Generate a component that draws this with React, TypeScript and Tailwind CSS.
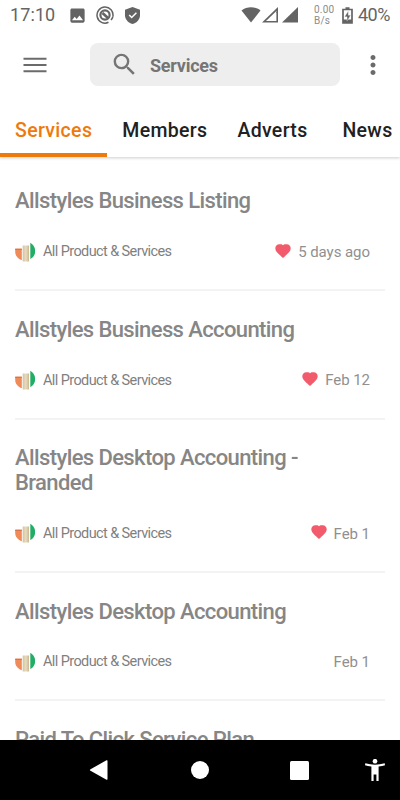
import { MdSearch, MdImage, MdMoreVert } from "react-icons/md";

interface Listing {
  title: string;
  date?: string;
  liked?: boolean;
}

const tabs = ["Services", "Members", "Adverts", "News"];

const listings: Listing[] = [
  { title: "Allstyles Business Listing", date: "5 days ago", liked: true },
  { title: "Allstyles Business Accounting", date: "Feb 12", liked: true },
  { title: "Allstyles Desktop Accounting - Branded", date: "Feb 1", liked: true },
  { title: "Allstyles Desktop Accounting", date: "Feb 1" },
  { title: "Paid To Click Service Plan" },
];

const StatusBar = () => (
  <div className="flex h-[30px] shrink-0 items-center pl-[10px] pr-[9px] text-[#646464]">
    <span className="w-[58px] text-[18px] leading-[30px] tracking-[0.1px]">17:10</span>
    <MdImage className="h-[19px] w-[19px]" />
    <svg className="ml-[9px] h-[18px] w-[18px]" viewBox="0 0 18 18" fill="none" stroke="currentColor">
      <path d="M12.500 16.300A8 8 0 1 1 16.900 10.500" strokeWidth="1.500" />
      <path d="M16.900 10.500q-.5 2-1.900 3.500" strokeWidth="1.500" />
      <circle cx="9" cy="9" r="4.600" strokeWidth="2.200" />
      <path d="M6.500 7l6 5.500" strokeWidth="2.600" />
    </svg>
    <svg className="ml-[11px] h-[17px] w-[15px]" viewBox="0 0 15 17">
      <path d="M7.500 0L15 2.800v5.400c0 4.200-3.200 7.700-7.500 8.800C3.200 15.900 0 12.400 0 8.200V2.800z" fill="currentColor" />
      <path d="M4.200 7.900l2.500 2.600 4.700-4.800" fill="none" stroke="#fff" strokeWidth="1.500" />
    </svg>
    <svg className="ml-auto h-[16px] w-[20px]" viewBox="0 0 20 16">
      <path d="M.5 3.400C6-.8 14-.8 19.500 3.400L10 15.500z" fill="currentColor" />
    </svg>
    <svg className="ml-[1px] h-[16px] w-[17px]" viewBox="0 0 17 16">
      <path d="M16 0v6h-1.600V4L4 14h7v1.600H0z" fill="currentColor" />
      <path d="M14.400 5H16v10.600h-5V14h3.400z" fill="currentColor" />
    </svg>
    <svg className="ml-[3px] h-[16px] w-[17px]" viewBox="0 0 17 16">
      <path d="M16 0v15.600H0z" fill="currentColor" />
    </svg>
    <div className="ml-[15px] w-[28px] text-[10px] leading-[11px] tracking-[0.2px] text-[#8c8c8c]">
      <div>0.00</div>
      <div>B/s</div>
    </div>
    <svg className="h-[17px] w-[11px]" viewBox="0 0 11 17">
      <path d="M1 2.500h9V16H1zM3.500 1h4" fill="none" stroke="currentColor" strokeWidth="1.700" />
      <path d="M1 12.500h9V16H1z" fill="currentColor" />
      <path d="M6.300 4L2.600 9.800h2.500V14L8.600 8.300H6.300z" fill="currentColor" stroke="#fff" strokeWidth=".3" />
    </svg>
    <span className="ml-[5px] w-[33px] text-[18px] leading-[30px] tracking-[-0.5px]">40%</span>
  </div>
);

const Header = () => (
  <header className="relative z-20 flex h-[70px] shrink-0 items-center bg-white pl-[23px] pr-[12.5px] text-[#6b6b6b]">
    <svg className="h-[16px] w-[24px]" viewBox="0 0 24 16" fill="currentColor">
      <path d="M.5.7h23v2H.5zM.5 7h23v2H.5zM.5 13.300h23v2H.5z" />
    </svg>
    <div className="ml-[43px] mt-[-1px] flex h-[43px] w-[250px] items-center rounded-[8px] bg-[#eeeeee] pl-[20px] text-[#757575]">
      <MdSearch className="mt-[-1px] h-[29px] w-[29px]" />
      <span className="ml-[11px] mt-[2px] text-[18px] font-bold leading-[22px] tracking-[-0.25px]">Services</span>
    </div>
    <MdMoreVert className="ml-auto h-[30px] w-[30px]" />
  </header>
);

const Tabs = () => (
  <nav className="relative z-10 flex h-[57px] shrink-0 bg-white text-[19.5px] font-medium tracking-[0.33px] text-[#212121] shadow-[0_1px_3px_rgba(0,0,0,0.2)]">
    {tabs.map((tab, i) => (
      <div
        key={tab}
        className={`flex h-[57px] min-w-[105px] shrink-0 items-center border-b-4 px-[15px] pt-[8px] ${
          i === 0 ? "border-[#ee7a0b] text-[#ee7a0b]" : "border-transparent"
        }`}
      >
        {tab}
      </div>
    ))}
  </nav>
);

const CategoryLogo = () => (
  <svg className="mt-[-1px] h-[20px] w-[20px]" viewBox="0 0 20 20">
    <defs>
      <linearGradient id="sand" x1="0" x2="1">
        <stop offset="0" stopColor="#d3c3a0" />
        <stop offset=".5" stopColor="#e8dcc0" />
        <stop offset="1" stopColor="#c9b891" />
      </linearGradient>
    </defs>
    <path d="M.2 6.700h6.600v11.600C3 17 .2 13.800.2 10z" fill="#f08a59" />
    <path d="M.2 6.700h6.600v1.300H.2z" fill="#d8744c" />
    <path d="M7.700 3.500h6.300v16H7.700z" fill="url(#sand)" />
    <path d="M15.300.7C18.300 2.700 20.200 5.600 20.200 9.200c0 3.100-1.700 6.200-4.900 7.900z" fill="#20ad65" />
  </svg>
);

const ListingRow = ({ title, date, liked }: Listing) => (
  <article className="mx-[15px] shrink-0 border-b-2 border-[#f3f3f3] pb-[27.1px] pt-[25.5px]">
    <h2 className="w-[310px] text-[22px] font-medium leading-[25px] tracking-[-0.6px] text-[#868686]">{title}</h2>
    {date && (
      <div className="mt-[28.8px] flex h-[20px] items-center pr-[15px]">
        <CategoryLogo />
        <span className="ml-[8px] text-[14.5px] tracking-[-0.6px] text-[#7f7f7f]">All Product &amp; Services</span>
        <div className="ml-auto flex items-center">
          {liked && (
            <svg className="mt-[-3px] h-[14px] w-[16px]" viewBox="0 0 16 14">
              <path
                d="M8 14L6.800 12.900C2.700 9.300.3 7.200.3 4.300.3 1.900 1.900.2 4.300.2h1.200C6.800.2 7.500.7 8 1.300 8.500.7 9.200.2 10.500.2h1.200c2.400 0 4 1.700 4 4.100 0 2.900-2.400 5-6.500 8.600z"
                fill="#f15b6c"
              />
            </svg>
          )}
          <span className="ml-[7px] text-[15px] tracking-[-0.05px] text-[#909090]">{date}</span>
        </div>
      </div>
    )}
  </article>
);

const NavBar = () => (
  <div className="flex h-[60px] shrink-0 items-center bg-black pl-[89px] pr-[15px] text-white">
    <svg className="h-[20px] w-[20px]" viewBox="0 0 20 20" fill="currentColor">
      <path d="M1.500 9.200L17.500.3q1-.4 1 .6v18.200q0 1-1 .6L1.500 10.800q-1.200-.8 0-1.600z" />
    </svg>
    <div className="ml-[82px] h-[18px] w-[18px] rounded-full bg-white" />
    <div className="ml-[81px] h-[19px] w-[19px] rounded-[1.5px] bg-white" />
    <svg className="ml-auto h-[22px] w-[20px]" viewBox="0 0 20 22" fill="currentColor">
      <circle cx="10" cy="2.200" r="2.300" />
      <path d="M.3 4.300Q10 7.200 19.700 4.300l.3 2Q17.500 7.100 13.600 7.600V22h-2.200v-6.500H8.600V22H6.400V7.600Q2.500 7.100 0 6.300z" />
    </svg>
  </div>
);

const App = () => {
  return (
    <div className="flex h-[800px] w-[400px] flex-col overflow-hidden bg-white font-['Roboto',sans-serif]">
      <StatusBar />
      <Header />
      <Tabs />
      <main className="flex min-h-0 flex-1 flex-col overflow-hidden pt-[5.9px]">
        {listings.map((listing) => (
          <ListingRow key={listing.title} {...listing} />
        ))}
      </main>
      <NavBar />
    </div>
  );
};

export default App;
